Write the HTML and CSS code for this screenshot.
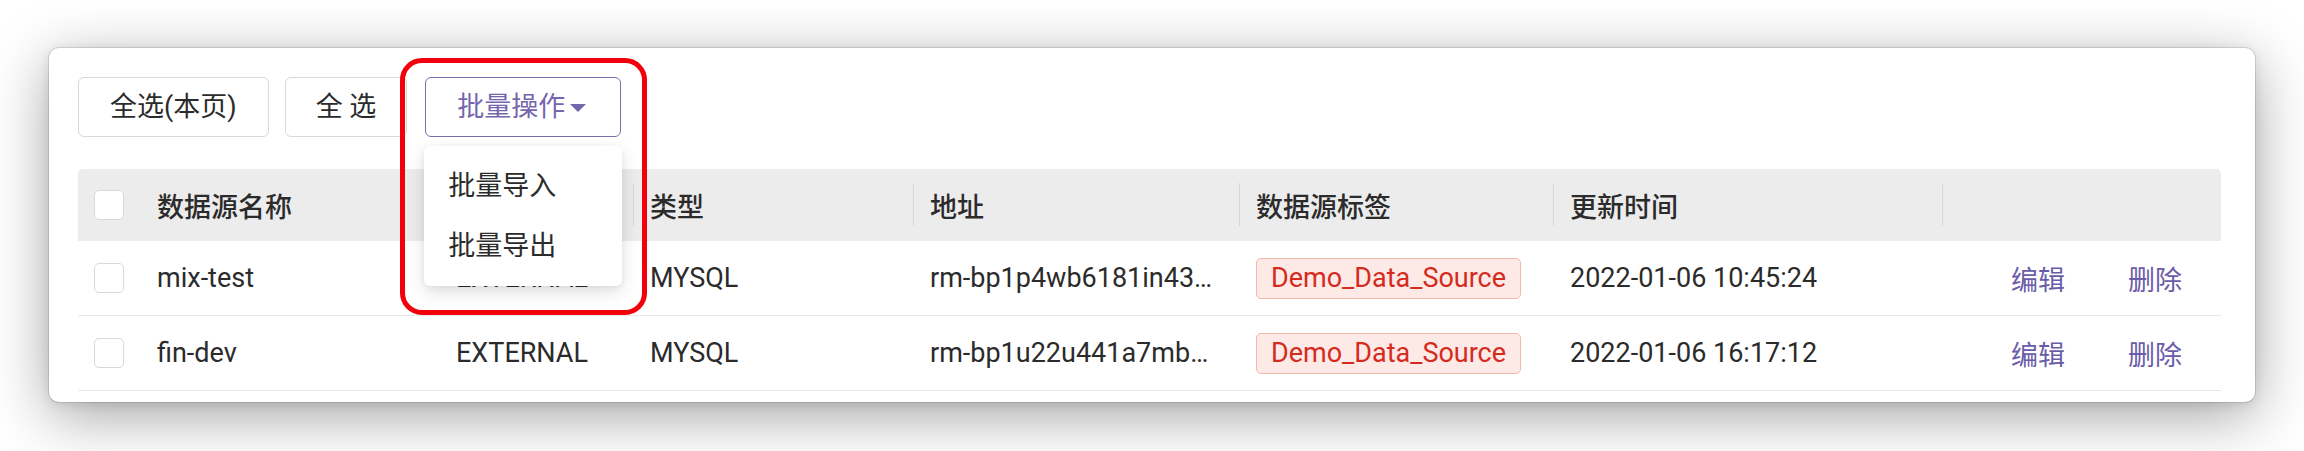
FILE: index.html
```html
<!DOCTYPE html>
<html lang="zh-CN">
<head>
<meta charset="utf-8">
<title>数据源管理</title>
<link rel="stylesheet" href="styles.css">
</head>
<body>
<div class="card">
  <div class="toolbar">
    <button class="btn btn-page">全选(本页)</button>
    <button class="btn btn-all">全 选</button>
    <div class="dropdown">
      <button class="btn btn-batch">批量操作<span class="caret"></span></button>
      <ul class="menu">
        <li>批量导入</li>
        <li>批量导出</li>
      </ul>
      <div class="highlight"></div>
    </div>
  </div>
  <table class="table">
    <colgroup>
      <col class="c-check">
      <col class="c-name">
      <col class="c-source">
      <col class="c-type">
      <col class="c-addr">
      <col class="c-tag">
      <col class="c-time">
      <col class="c-act">
    </colgroup>
    <thead>
      <tr>
        <th class="cell-check"><span class="checkbox"></span></th>
        <th class="cell-name">数据源名称</th>
        <th class="sep">数据源来源</th>
        <th class="sep">类型</th>
        <th class="sep">地址</th>
        <th class="sep">数据源标签</th>
        <th class="sep">更新时间</th>
        <th class="sep"></th>
      </tr>
    </thead>
    <tbody>
      <tr>
        <td class="cell-check"><span class="checkbox"></span></td>
        <td class="cell-name">mix-test</td>
        <td>EXTERNAL</td>
        <td>MYSQL</td>
        <td class="addr">rm-bp1p4wb6181in43ql.mysql.rds.aliyuncs.com</td>
        <td><span class="tag">Demo_Data_Source</span></td>
        <td>2022-01-06 10:45:24</td>
        <td><div class="actions"><a class="link">编辑</a><a class="link">删除</a></div></td>
      </tr>
      <tr>
        <td class="cell-check"><span class="checkbox"></span></td>
        <td class="cell-name">fin-dev</td>
        <td>EXTERNAL</td>
        <td>MYSQL</td>
        <td class="addr">rm-bp1u22u441a7mbqko.mysql.rds.aliyuncs.com</td>
        <td><span class="tag">Demo_Data_Source</span></td>
        <td>2022-01-06 16:17:12</td>
        <td><div class="actions"><a class="link">编辑</a><a class="link">删除</a></div></td>
      </tr>
    </tbody>
  </table>
</div>
</body>
</html>
```

FILE: styles.css
```css
html, body {
  margin: 0;
  background: #ffffff;
}

body {
  box-sizing: border-box;
  min-height: 451px;
  padding: 48px 49px 49px;
  font-family: Roboto, "Noto Sans CJK SC", sans-serif;
  font-size: 27px;
  color: #2b2b2b;
}

.card {
  box-sizing: border-box;
  height: 354px;
  padding: 29px 34px 11px 29px;
  background: #ffffff;
  border-radius: 10px;
  box-shadow:
    0 0 0 1px rgba(0, 0, 0, 0.1),
    0 2px 12px rgba(0, 0, 0, 0.1),
    0 14px 60px rgba(0, 0, 0, 0.36);
}

.toolbar {
  display: flex;
  gap: 16px;
  height: 60px;
  margin-bottom: 32px;
}

.btn {
  box-sizing: border-box;
  height: 60px;
  margin: 0;
  padding: 0 31px;
  background: #ffffff;
  border: 1px solid #d9d9d9;
  border-radius: 6px;
  font: inherit;
  color: #2b2b2b;
  line-height: 1;
  white-space: nowrap;
}

.btn-all {
  padding: 0 30px;
}

.dropdown {
  position: relative;
  margin-left: 2px;
}

.btn-batch {
  display: flex;
  align-items: center;
  padding: 0 34px 0 31px;
  border-color: #7a6eae;
  color: #7467ad;
}

.caret {
  width: 0;
  height: 0;
  margin-left: 5px;
  margin-top: 2px;
  border-left: 8px solid transparent;
  border-right: 8px solid transparent;
  border-top: 8px solid currentColor;
}

.menu {
  position: absolute;
  z-index: 2;
  top: calc(100% + 9px);
  left: -1px;
  width: 198px;
  margin: 0;
  padding: 10px 0;
  list-style: none;
  background: #ffffff;
  border-radius: 6px;
  box-shadow: 0 6px 18px rgba(0, 0, 0, 0.12), 0 2px 6px rgba(0, 0, 0, 0.06);
}

.menu li {
  height: 60px;
  line-height: 60px;
  padding-left: 24px;
  color: #2b2b2b;
}

.highlight {
  position: absolute;
  z-index: 3;
  left: -25px;
  top: -19px;
  box-sizing: border-box;
  width: 247px;
  height: 257px;
  border: 5px solid #f2000c;
  border-radius: 22px;
  pointer-events: none;
}

.table {
  width: 100%;
  border-collapse: separate;
  border-spacing: 0;
  table-layout: fixed;
}

.c-check { width: 63px; }
.c-name { width: 298px; }
.c-source { width: 194px; }
.c-type { width: 280px; }
.c-addr { width: 326px; }
.c-tag { width: 314px; }
.c-time { width: 389px; }
.c-act { width: 279px; }

.table th {
  position: relative;
  height: 72px;
  padding: 0 17px;
  background: #ececec;
  text-align: left;
  font-weight: 500;
  color: #2b2b2b;
  white-space: nowrap;
}

.table th:first-child {
  border-radius: 5px 0 0 0;
}

.table th:last-child {
  border-radius: 0 5px 0 0;
}

.table th.sep::before {
  content: "";
  position: absolute;
  left: 0;
  top: 14px;
  bottom: 15px;
  width: 1px;
  background: #d7d7d7;
}

.table td {
  height: 74px;
  padding: 0 17px;
  border-bottom: 1px solid #e8e8e8;
  white-space: nowrap;
  overflow: hidden;
  text-overflow: ellipsis;
  vertical-align: middle;
}

.table .cell-check,
.table .cell-name {
  padding-left: 16px;
}

.checkbox {
  display: block;
  box-sizing: border-box;
  width: 30px;
  height: 30px;
  background: #ffffff;
  border: 1px solid #d9d9d9;
  border-radius: 5px;
}

.tag {
  display: inline-block;
  box-sizing: border-box;
  height: 41px;
  line-height: 39px;
  padding: 0 14px;
  background: #fde9e5;
  border: 1px solid #f3b7ac;
  border-radius: 5px;
  color: #d52b1e;
}

.actions {
  display: flex;
  justify-content: flex-end;
  gap: 63px;
  padding-right: 22px;
}

.link {
  color: #6a5ca8;
  cursor: pointer;
}
```
